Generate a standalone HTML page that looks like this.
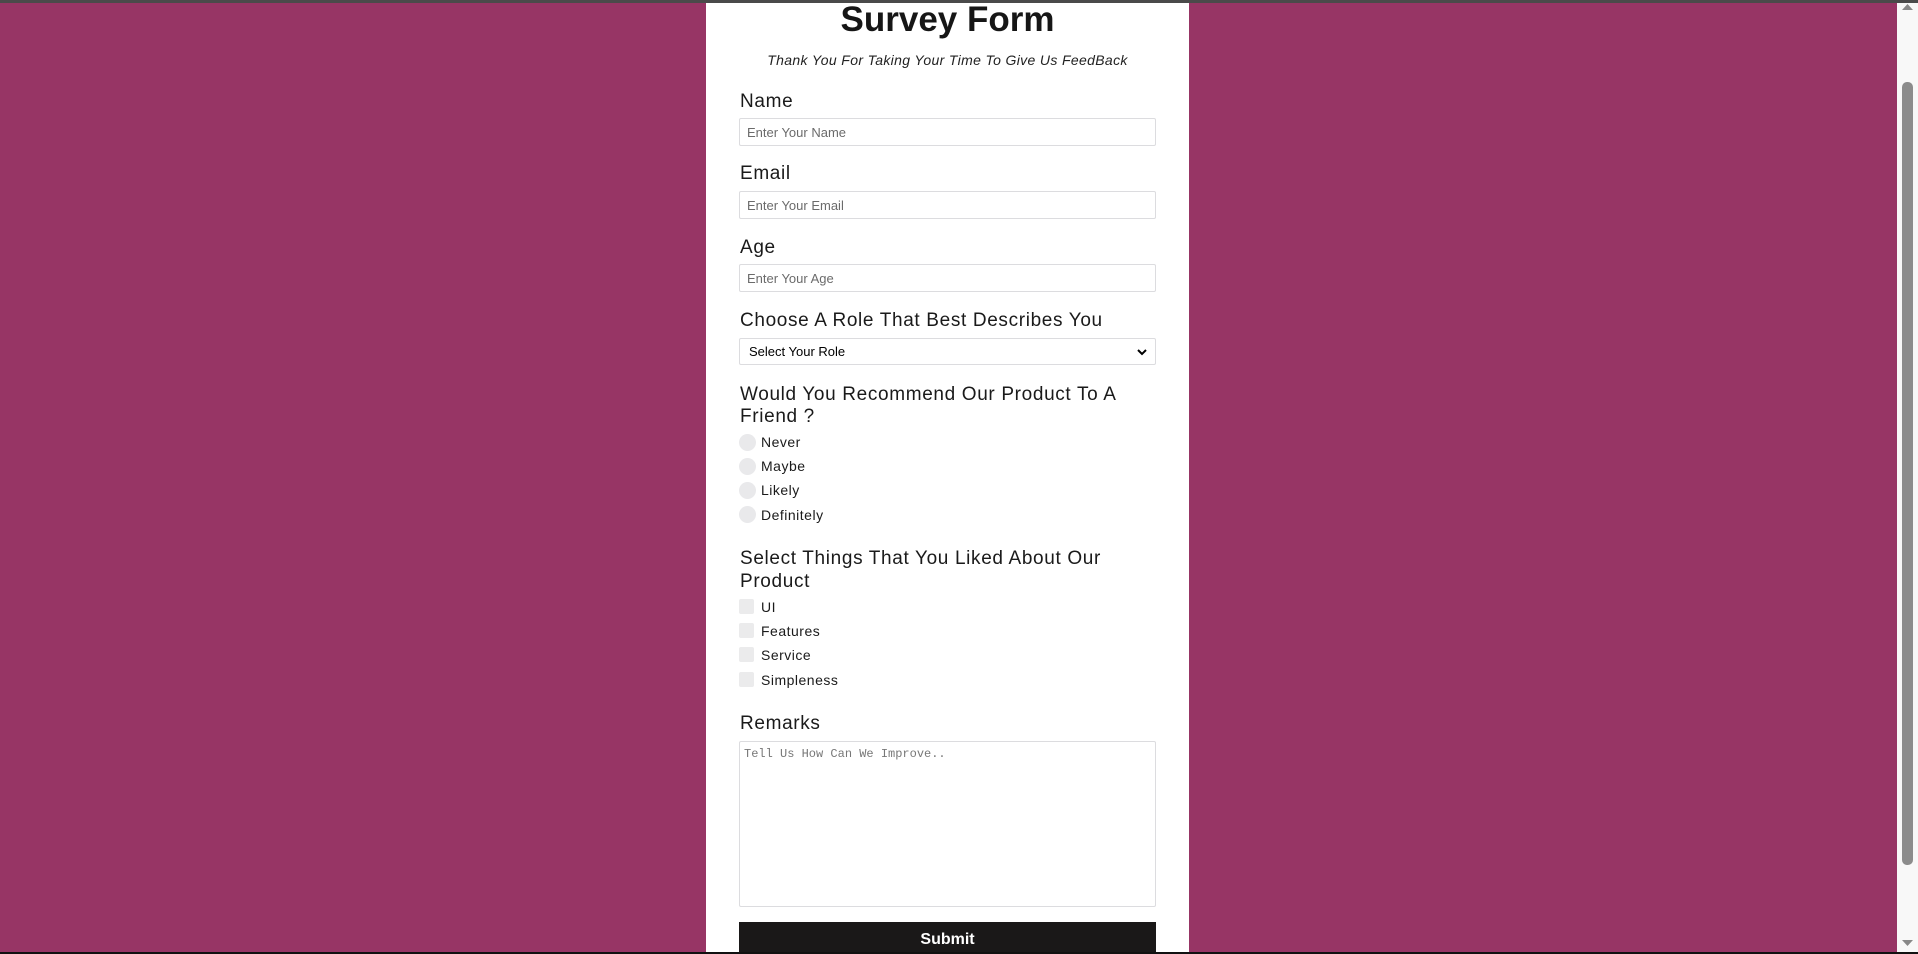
<!DOCTYPE html>
<html><head><meta charset="utf-8"><style>
*{box-sizing:border-box;margin:0;padding:0}
html,body{width:1918px;height:954px;overflow:hidden;background:#973565;font-family:"Liberation Sans",sans-serif;position:relative}
.a{position:absolute}
.top{left:0;top:0;width:1918px;height:3px;background:#4a4a4a}
.bot{left:0;top:952px;width:1918px;height:2px;background:#111}
.panel{left:706px;top:3px;width:483px;height:949px;background:#fff}
.lbl{left:740px;font-size:19px;color:#1a1a1a;line-height:22px;letter-spacing:0.65px;margin-top:2px}
.inp{left:739px;width:417px;height:28px;border:1px solid #dcdcdf;border-radius:2px;font-size:13px;color:#6b6b6b;padding:6px 7px;background:#fff}
.rad{left:739px;width:17px;height:17px;border-radius:50%;background:#e9e9eb}
.chk{left:739px;width:15px;height:15px;border-radius:2px;background:#ebebec}
.opt{left:761px;font-size:14px;color:#1a1a1a;line-height:16px;letter-spacing:0.5px}
.sb{left:1897px;top:3px;width:21px;height:949px;background:#f8f8f8}
.thumb{left:1902px;top:82px;width:11px;height:783px;background:#8c8c8c;border-radius:5px}
</style></head><body>
<div class="a top"></div>
<div class="a panel"></div>
<div class="a" style="left:706px;top:0;width:483px;text-align:center;font-size:35px;font-weight:bold;color:#161616;line-height:40px">Survey Form</div>
<div class="a" style="left:706px;top:51px;width:483px;text-align:center;font-size:14px;font-style:italic;color:#222;line-height:18px;letter-spacing:0.35px">Thank You For Taking Your Time To Give Us FeedBack</div>

<div class="a lbl" style="top:89px">Name</div>
<div class="a inp" style="top:118px">Enter Your Name</div>
<div class="a lbl" style="top:161px">Email</div>
<div class="a inp" style="top:191px">Enter Your Email</div>
<div class="a lbl" style="top:235px">Age</div>
<div class="a inp" style="top:264px">Enter Your Age</div>
<div class="a lbl" style="top:308px">Choose A Role That Best Describes You</div>
<div class="a inp" style="top:338px;height:27px;color:#000;padding:5px 9px">Select Your Role
<svg style="position:absolute;right:8px;top:9px" width="10" height="8" viewBox="0 0 10 8"><path d="M1 2l4 4 4-4" stroke="#000" stroke-width="2" fill="none"/></svg></div>
<div class="a lbl" style="top:382px">Would You Recommend Our Product To A</div>
<div class="a lbl" style="top:404px">Friend ?</div>
<div class="a rad" style="top:434px"></div><div class="a opt" style="top:434px">Never</div>
<div class="a rad" style="top:458px"></div><div class="a opt" style="top:458px">Maybe</div>
<div class="a rad" style="top:482px"></div><div class="a opt" style="top:482px">Likely</div>
<div class="a rad" style="top:506px"></div><div class="a opt" style="top:507px">Definitely</div>
<div class="a lbl" style="top:546px">Select Things That You Liked About Our</div>
<div class="a lbl" style="top:569px">Product</div>
<div class="a chk" style="top:599px"></div><div class="a opt" style="top:599px">UI</div>
<div class="a chk" style="top:623px"></div><div class="a opt" style="top:623px">Features</div>
<div class="a chk" style="top:647px"></div><div class="a opt" style="top:647px">Service</div>
<div class="a chk" style="top:672px"></div><div class="a opt" style="top:672px">Simpleness</div>
<div class="a lbl" style="top:711px">Remarks</div>
<div class="a inp" style="top:741px;height:166px;font-family:'Liberation Mono',monospace;font-size:12px;color:#777;padding:5px 4px">Tell Us How Can We Improve..</div>
<div class="a" style="left:739px;top:922px;width:417px;height:30px;background:#1a1818;color:#fff;font-weight:bold;font-size:16px;text-align:center;line-height:35px">Submit</div>
<div class="a sb"></div>
<div class="a thumb"></div>
<svg class="a" style="left:1902px;top:4px" width="11" height="7"><path d="M0 6L5.5 0 11 6z" fill="#888"/></svg>
<svg class="a" style="left:1902px;top:940px" width="11" height="7"><path d="M0 0L5.5 6 11 0z" fill="#888"/></svg>
<div class="a bot"></div>
</body></html>
